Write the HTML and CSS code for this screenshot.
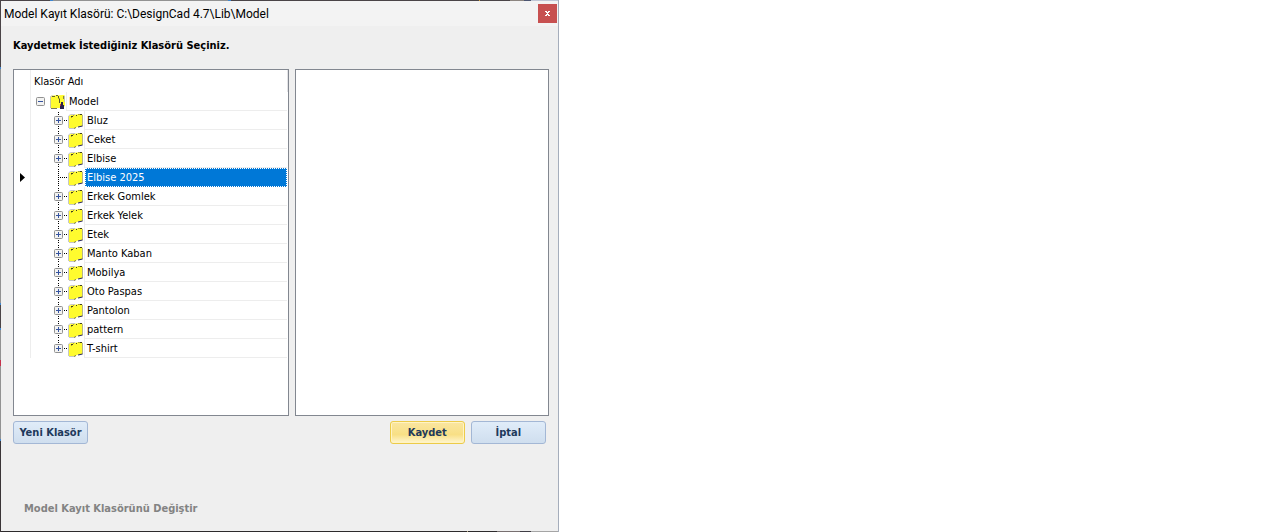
FILE: index.html
```html
<!DOCTYPE html>
<html lang="tr">
<head>
<meta charset="utf-8">
<title>Model Kayıt Klasörü</title>
<link rel="stylesheet" href="styles.css">
</head>
<body>
<svg class="defs" aria-hidden="true">
  <symbol id="folder" viewBox="0 0 16 16">
    <path d="M1 3L3 2L8 1.500L14 1L14.500 2V13L10 13.500L7 15H1Z" fill="#fffb2e"/>
    <path d="M.5 15V3L2.500 1.500H7M1 15.500H6" fill="none" stroke="#c6c6c6"/>
    <path d="M3 3.500H5M12 1.500H14M8 2.500H9" stroke="#3d3d20"/>
    <path d="M5 2.500H6M10 1.500H12M3 4.500H4" stroke="#a8a33a"/>
    <path d="M14.500 2V13" stroke="#b5b38c"/>
    <path d="M10 14L14.500 13" stroke="#2b2b60" stroke-width="1.200"/>
    <path d="M6 15.500L8 14.500" stroke="#77773a"/>
  </symbol>
  <symbol id="folder-root" viewBox="0 0 16 16">
    <path d="M1 2.500L3 1.500L14 1L15 2V12L11 14H1Z" fill="#fffb2e"/>
    <path d="M.5 14V2.500L2.500 1.500M14.500 2V8" fill="none" stroke="#c6c6b0"/>
    <path d="M2 2.500H5M6 1.500H8" stroke="#66642a"/>
    <path d="M8.500 2V4L9.500 5V9" fill="none" stroke="#55532a"/>
    <path d="M13.500 2V5" stroke="#88863a"/>
    <path d="M1 14.500H7" stroke="#77775c"/>
    <path d="M11 8H13V11H14V15H10V11H11Z" fill="#29234e"/>
    <path d="M10.500 10V12" stroke="#b63332"/>
  </symbol>
  <symbol id="box" viewBox="0 0 9 9">
    <rect x=".5" y=".5" width="8" height="8" rx="1" fill="#f3f3f1" stroke="#919191"/>
    <path d="M2 4.500H7" stroke="#3553a0"/>
  </symbol>
  <symbol id="branch" viewBox="0 0 14 19">
    <path d="M4.500 1V19" stroke="#000" stroke-dasharray="1 1"/>
    <path d="M10 9.500H14" stroke="#000" stroke-dasharray="1 1"/>
    <use href="#box" y="5" width="9" height="9"/>
    <path d="M4.500 7V12" stroke="#3553a0"/>
  </symbol>
  <symbol id="branch-leaf" viewBox="0 0 14 19">
    <path d="M4.500 1V19M6 9.500H14" stroke="#000" stroke-dasharray="1 1"/>
  </symbol>
  <symbol id="branch-end" viewBox="0 0 14 19">
    <path d="M4.500 1V5M10 9.500H14" stroke="#000" stroke-dasharray="1 1"/>
    <use href="#box" y="5" width="9" height="9"/>
    <path d="M4.500 7V12" stroke="#3553a0"/>
  </symbol>
</svg>
<main class="dialog">
  <header class="titlebar">
    <h1 class="title">Model Kayıt Klasörü: C:\DesignCad 4.7\Lib\Model</h1>
    <button class="close" type="button" aria-label="Kapat"><svg width="5" height="5" viewBox="0 0 5 5" shape-rendering="crispEdges" aria-hidden="true"><path d="M0 0H2V1H3V0H5V1H4V2H3V3H4V4H5V5H3V4H2V5H0V4H1V3H2V2H1V1H0Z" fill="#fff"/></svg></button>
  </header>
  <div class="content">
    <h2 class="prompt">Kaydetmek İstediğiniz Klasörü Seçiniz.</h2>
    <div class="panels">
      <section class="panel panel-tree">
        <div class="columns"><span class="gutter"></span><span class="column">Klasör Adı</span></div>
        <ul class="tree">
          <li class="row root"><span class="gutter"></span><button class="toggle" type="button" aria-label="Daralt"><svg width="9" height="9"><use href="#box"/></svg></button><svg class="icon"><use href="#folder-root"/></svg><span class="label">Model</span></li>
          <li class="row"><span class="gutter"></span><button class="toggle" type="button" aria-label="Genişlet"><svg class="branch"><use href="#branch"/></svg></button><svg class="icon"><use href="#folder"/></svg><span class="label">Bluz</span></li>
          <li class="row"><span class="gutter"></span><button class="toggle" type="button" aria-label="Genişlet"><svg class="branch"><use href="#branch"/></svg></button><svg class="icon"><use href="#folder"/></svg><span class="label">Ceket</span></li>
          <li class="row"><span class="gutter"></span><button class="toggle" type="button" aria-label="Genişlet"><svg class="branch"><use href="#branch"/></svg></button><svg class="icon"><use href="#folder"/></svg><span class="label">Elbise</span></li>
          <li class="row selected"><span class="gutter"><svg width="5" height="9" viewBox="0 0 5 9" aria-hidden="true"><path d="M0 0L5 4.500L0 9Z"/></svg></span><span class="toggle"><svg class="branch"><use href="#branch-leaf"/></svg></span><svg class="icon"><use href="#folder"/></svg><span class="label">Elbise 2025</span></li>
          <li class="row"><span class="gutter"></span><button class="toggle" type="button" aria-label="Genişlet"><svg class="branch"><use href="#branch"/></svg></button><svg class="icon"><use href="#folder"/></svg><span class="label">Erkek Gomlek</span></li>
          <li class="row"><span class="gutter"></span><button class="toggle" type="button" aria-label="Genişlet"><svg class="branch"><use href="#branch"/></svg></button><svg class="icon"><use href="#folder"/></svg><span class="label">Erkek Yelek</span></li>
          <li class="row"><span class="gutter"></span><button class="toggle" type="button" aria-label="Genişlet"><svg class="branch"><use href="#branch"/></svg></button><svg class="icon"><use href="#folder"/></svg><span class="label">Etek</span></li>
          <li class="row"><span class="gutter"></span><button class="toggle" type="button" aria-label="Genişlet"><svg class="branch"><use href="#branch"/></svg></button><svg class="icon"><use href="#folder"/></svg><span class="label">Manto Kaban</span></li>
          <li class="row"><span class="gutter"></span><button class="toggle" type="button" aria-label="Genişlet"><svg class="branch"><use href="#branch"/></svg></button><svg class="icon"><use href="#folder"/></svg><span class="label">Mobilya</span></li>
          <li class="row"><span class="gutter"></span><button class="toggle" type="button" aria-label="Genişlet"><svg class="branch"><use href="#branch"/></svg></button><svg class="icon"><use href="#folder"/></svg><span class="label">Oto Paspas</span></li>
          <li class="row"><span class="gutter"></span><button class="toggle" type="button" aria-label="Genişlet"><svg class="branch"><use href="#branch"/></svg></button><svg class="icon"><use href="#folder"/></svg><span class="label">Pantolon</span></li>
          <li class="row"><span class="gutter"></span><button class="toggle" type="button" aria-label="Genişlet"><svg class="branch"><use href="#branch"/></svg></button><svg class="icon"><use href="#folder"/></svg><span class="label">pattern</span></li>
          <li class="row"><span class="gutter"></span><button class="toggle" type="button" aria-label="Genişlet"><svg class="branch"><use href="#branch-end"/></svg></button><svg class="icon"><use href="#folder"/></svg><span class="label">T-shirt</span></li>
        </ul>
      </section>
      <section class="panel panel-preview"></section>
    </div>
    <div class="actions">
      <button class="btn new-folder" type="button">Yeni Klasör</button>
      <button class="btn primary" type="button">Kaydet</button>
      <button class="btn" type="button">İptal</button>
    </div>
    <p class="change">Model Kayıt Klasörünü Değiştir</p>
  </div>
</main>
</body>
</html>
```

FILE: styles.css
```css
* { box-sizing: border-box; }
body {
  margin: 0;
  background: #fff;
  color: #000;
  font: 11px/13px "DejaVu Sans Condensed", "DejaVu Sans", sans-serif;
}
h1, h2, p, ul { margin: 0; padding: 0; }
svg { display: block; flex: none; }
.defs { position: absolute; width: 0; height: 0; }
.dialog {
  display: flex;
  flex-direction: column;
  width: 44%;
  min-width: 480px;
  min-height: 100vh;
  padding: 1px 0 1px 1px;
  border-right: 1px solid #a5adbb;
  background:
    linear-gradient(#efefef, #efefef) content-box no-repeat,
    linear-gradient(#4a4447 67px, #3f86cf 67px 69px, #929292 69px 303px, #3f86cf 303px 305px, #4a4447 305px 328px, #3f86cf 328px 330px, #929292 330px 360px, #c5324c 360px 366px, #929292 366px 439px, #3f86cf 439px 441px, #3a3437 441px) 0 0 / 1px 100% no-repeat,
    linear-gradient(90deg, #4a4447 50px, #3f86cf 50px 53px, #929292 53px 228px, #3f86cf 228px 231px, #4a4447 231px 479px, #d5a338 479px 480px, #4a4447 480px 510px, #8c8580 510px 524px, #4b5470 524px 531px, #bfc6d5 531px) 0 0 / 100% 1px no-repeat,
    linear-gradient(90deg, #2d2a2c 467px, #b9ab85 467px 468px, #2d2a2c 468px 497px, #776f70 497px 520px, #3f3d45 520px 531px, #a5a5a5 531px) 0 100% / 100% 1px no-repeat;
}
.titlebar {
  display: flex;
  align-items: center;
  justify-content: space-between;
  height: 25px;
  padding: 0 1px 0 3px;
  background: #f3f3f3;
}
.title {
  font: 12px/16px Roboto, "Open Sans", sans-serif;
  white-space: nowrap;
}
.close {
  display: grid;
  place-items: center;
  width: 19px;
  height: 19px;
  padding: 0;
  border: 0;
  background: #c75050;
}
.content {
  display: flex;
  flex: 1;
  flex-direction: column;
  padding: 13px 9px 16px 12px;
}
.prompt { font-size: 11px; line-height: 13px; }
.panels {
  display: grid;
  flex: 1;
  grid-template-columns: 276fr 254fr;
  gap: 6px;
  margin-top: 17px;
}
.panel {
  border: 1px solid #828790;
  background: #fff;
}
.columns, .row { display: flex; }
.columns { height: 22px; }
.column {
  flex: 1;
  padding: 5px 3px;
  border-right: 1px solid #e3e3e6;
}
.gutter {
  display: flex;
  align-items: center;
  justify-content: center;
  width: 17px;
  border-right: 1px solid #ededed;
}
.tree { list-style: none; }
.row {
  align-items: center;
  height: 19px;
  padding-right: 1px;
}
.row .gutter { height: 100%; }
.toggle {
  width: 14px;
  height: 19px;
  margin-left: 23px;
  padding: 0;
  border: 0;
  background: none;
}
.root .toggle { margin-left: 5px; }
.branch { width: 14px; height: 19px; }
.icon { width: 16px; height: 16px; }
.label {
  flex: 1;
  height: 19px;
  padding: 3px 2px 2px;
  border-bottom: 1px solid #ededed;
  border-left: 1px solid #ededed;
}
.selected .label {
  margin-left: 1px;
  padding: 2px 1px;
  border: 1px dotted #fff;
  background: #0078d7;
  color: #fff;
}
.actions {
  display: flex;
  gap: 6px;
  margin-top: 5px;
  padding-right: 3px;
}
.btn {
  width: 75px;
  height: 23px;
  padding: 0;
  border: 1px solid #a3b7d5;
  border-radius: 3px;
  background: linear-gradient(#e0ecf9, #cfdeee);
  color: #1e395b;
  font: bold 11px/13px "DejaVu Sans Condensed", "DejaVu Sans", sans-serif;
  white-space: nowrap;
}
.new-folder { margin-right: auto; }
.primary {
  border-color: #eccb48;
  background: linear-gradient(#fae6a0, #f8df85 60%, #fff6d0);
  box-shadow: inset 0 0 0 1px #fff3c4;
}
.change {
  margin-top: 58px;
  padding-left: 11px;
  color: #838383;
  font-weight: bold;
}
```
